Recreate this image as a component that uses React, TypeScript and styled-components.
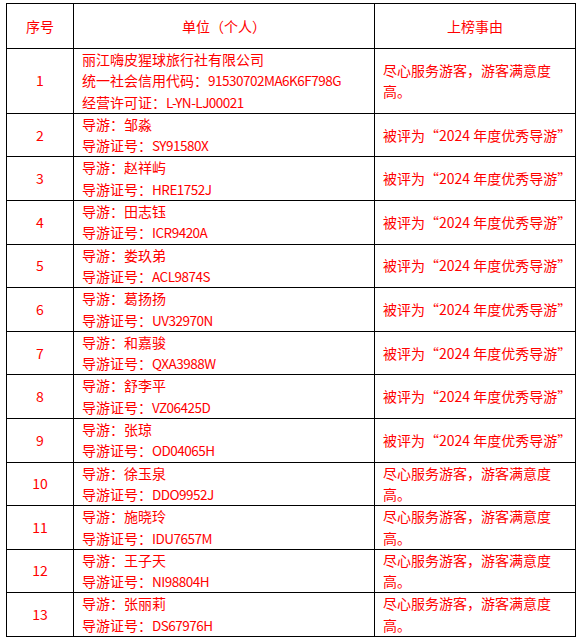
import React from "react";
import styled, { createGlobalStyle } from "styled-components";

const GlobalStyle = createGlobalStyle`
  html, body {
    margin: 0;
    padding: 0;
    background: #ffffff;
  }
  body {
    font-family: "Noto Sans CJK SC", "Noto Sans", sans-serif;
  }
`;

const Page = styled.div`
  padding: 3px 6px;
`;

const Table = styled.table`
  width: 569px;
  border-collapse: collapse;
  table-layout: fixed;
  color: #ff0000;
  font-size: 14px;
`;

const HeadCell = styled.th`
  height: 44px;
  padding: 0;
  border: 1px solid #000000;
  font-weight: normal;
  text-align: center;
  vertical-align: middle;
`;

const Cell = styled.td<{ $align?: "left" | "center" }>`
  padding: 0 8px;
  border: 1px solid #000000;
  line-height: 21.3px;
  text-align: ${(p) => p.$align ?? "left"};
  vertical-align: middle;
`;

const Line = styled.div`
  white-space: nowrap;
`;

// latin codes in the source are narrower than the CJK font's own latin
const Code = styled.span`
  font-size: 13.5px;
  letter-spacing: -0.5px;
`;

const Reason = styled.div<{ $nowrap?: boolean }>`
  white-space: ${(p) => (p.$nowrap ? "nowrap" : "normal")};
`;

const SERVICE = "尽心服务游客，游客满意度高。";
const AWARD = "被评为“2024 年度优秀导游”";

interface Guide {
  name: string;
  cert: string;
  reason: string;
}

const guides: Guide[] = [
  { name: "邹淼", cert: "SY91580X", reason: AWARD },
  { name: "赵祥屿", cert: "HRE1752J", reason: AWARD },
  { name: "田志钰", cert: "ICR9420A", reason: AWARD },
  { name: "娄玖弟", cert: "ACL9874S", reason: AWARD },
  { name: "葛扬扬", cert: "UV32970N", reason: AWARD },
  { name: "和嘉骏", cert: "QXA3988W", reason: AWARD },
  { name: "舒李平", cert: "VZ06425D", reason: AWARD },
  { name: "张琼", cert: "OD04065H", reason: AWARD },
  { name: "徐玉泉", cert: "DDO9952J", reason: SERVICE },
  { name: "施晓玲", cert: "IDU7657M", reason: SERVICE },
  { name: "王子天", cert: "NI98804H", reason: SERVICE },
  { name: "张丽莉", cert: "DS67976H", reason: SERVICE },
];

export default function App() {
  return (
    <Page>
      <GlobalStyle />
      <Table>
        <colgroup>
          <col style={{ width: 67 }} />
          <col style={{ width: 301 }} />
          <col style={{ width: 201 }} />
        </colgroup>
        <thead>
          <tr>
            <HeadCell>序号</HeadCell>
            <HeadCell>单位（个人）</HeadCell>
            <HeadCell>上榜事由</HeadCell>
          </tr>
        </thead>
        <tbody>
          <tr>
            <Cell $align="center">1</Cell>
            <Cell>
              <Line>丽江嗨皮猩球旅行社有限公司</Line>
              <Line>
                统一社会信用代码：<Code>91530702MA6K6F798G</Code>
              </Line>
              <Line>
                经营许可证：<Code>L-YN-LJ00021</Code>
              </Line>
            </Cell>
            <Cell>
              <Reason>{SERVICE}</Reason>
            </Cell>
          </tr>
          {guides.map((g, i) => (
            <tr key={g.cert}>
              <Cell $align="center">{i + 2}</Cell>
              <Cell>
                <Line>导游：{g.name}</Line>
                <Line>
                  导游证号：<Code>{g.cert}</Code>
                </Line>
              </Cell>
              <Cell>
                <Reason $nowrap={g.reason === AWARD}>{g.reason}</Reason>
              </Cell>
            </tr>
          ))}
        </tbody>
      </Table>
    </Page>
  );
}
